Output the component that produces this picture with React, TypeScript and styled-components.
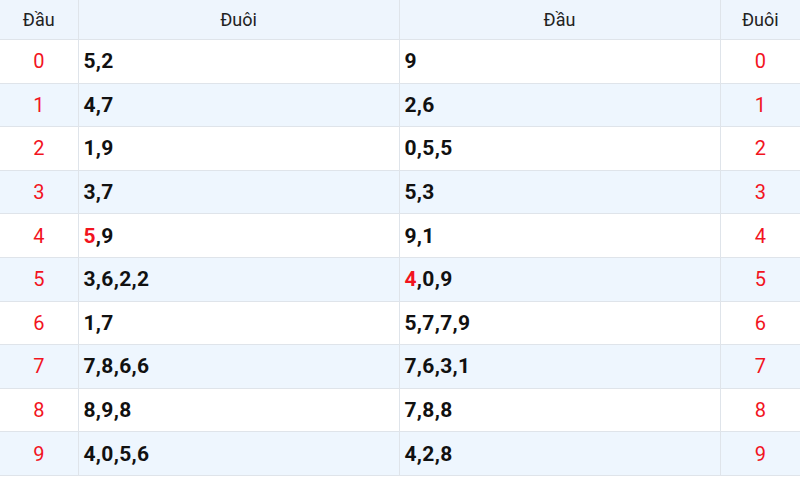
import styled, { createGlobalStyle } from 'styled-components';

const GlobalStyle = createGlobalStyle`
  html, body {
    margin: 0;
    padding: 0;
    background: #ffffff;
    font-family: Roboto, "Liberation Sans", Arial, sans-serif;
  }
`

type Row = { head: string; left: string; right: string; leftHot?: boolean; rightHot?: boolean }

const rows: Row[] = [
  { head: '0', left: '5,2', right: '9' },
  { head: '1', left: '4,7', right: '2,6' },
  { head: '2', left: '1,9', right: '0,5,5' },
  { head: '3', left: '3,7', right: '5,3' },
  { head: '4', left: '5,9', right: '9,1', leftHot: true },
  { head: '5', left: '3,6,2,2', right: '4,0,9', rightHot: true },
  { head: '6', left: '1,7', right: '5,7,7,9' },
  { head: '7', left: '7,8,6,6', right: '7,6,3,1' },
  { head: '8', left: '8,9,8', right: '7,8,8' },
  { head: '9', left: '4,0,5,6', right: '4,2,8' },
]

function Values({ text, hot }: { text: string; hot?: boolean }) {
  if (!hot) return <>{text}</>
  return (
    <>
      <Hot>{text[0]}</Hot>
      {text.slice(1)}
    </>
  )
}

export default function App() {
  return (
    <>
      <GlobalStyle />
      <Table>
        <colgroup>
          <col style={{ width: 78 }} />
          <col style={{ width: 321 }} />
          <col style={{ width: 321 }} />
          <col style={{ width: 80 }} />
        </colgroup>
        <thead>
          <tr>
            <Th>Đầu</Th>
            <Th>Đuôi</Th>
            <Th>Đầu</Th>
            <Th>Đuôi</Th>
          </tr>
        </thead>
        <tbody>
          {rows.map((r, i) => (
            <BodyRow key={r.head} $striped={i % 2 === 1}>
              <Digit>{r.head}</Digit>
              <Nums><Values text={r.left} hot={r.leftHot} /></Nums>
              <Nums><Values text={r.right} hot={r.rightHot} /></Nums>
              <Digit>{r.head}</Digit>
            </BodyRow>
          ))}
        </tbody>
      </Table>
    </>
  )
}

const Table = styled.table`
  width: 800px;
  border-collapse: collapse;
  table-layout: fixed;
`

const Th = styled.th`
  height: 39px;
  padding: 0;
  background: #eef5fd;
  color: #222;
  font-size: 18px;
  font-weight: 400;
  text-align: center;
  border-bottom: 1px solid #dfe4ea;
  border-left: 1px solid #dfe4ea;
  &:first-child { border-left: none; }
`

const BodyRow = styled.tr<{ $striped: boolean }>`
  height: 43.6px;
  background: ${p => (p.$striped ? '#eef6fe' : '#ffffff')};
`

const Digit = styled.td`
  padding: 0;
  text-align: center;
  color: #f2141e;
  font-size: 20px;
  border-bottom: 1px solid #dfe4ea;
  border-left: 1px solid #dfe4ea;
  &:first-child { border-left: none; }
`

const Nums = styled.td`
  padding: 0 0 0 5px;
  color: #111;
  font-size: 21px;
  font-weight: 700;
  letter-spacing: 0.3px;
  border-bottom: 1px solid #dfe4ea;
  border-left: 1px solid #dfe4ea;
`

const Hot = styled.span`
  color: #f2141e;
`
